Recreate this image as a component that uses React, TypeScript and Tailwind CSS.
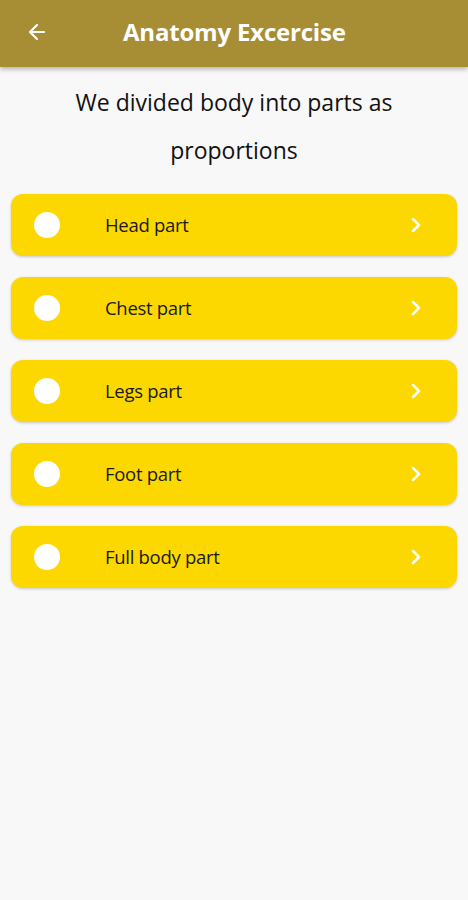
import { ArrowLeft, ChevronRight } from 'lucide-react';

const parts = ['Head part', 'Chest part', 'Legs part', 'Foot part', 'Full body part'];

export default function App() {
  return (
    <div className="min-h-[900px] w-full bg-[#f8f8f8]" style={{ fontFamily: '"Open Sans", "Noto Sans", sans-serif' }}>
      <header className="flex h-[67px] items-center bg-[#a78e35] pl-[25px] pr-6 pb-[4px] shadow-[0_2px_5px_rgba(0,0,0,0.3)]">
        <ArrowLeft className="h-[24px] w-[24px] text-white" strokeWidth={2.2} />
        <h1 className="ml-[74px] text-[24px] font-bold tracking-[-0.2px] text-white">Anatomy Excercise</h1>
      </header>

      <p className="mx-auto mt-[11px] w-[360px] text-center text-[23px] leading-[48px] text-[#111]">
        We divided body into parts as proportions
      </p>

      <div className="mt-[20px] flex flex-col gap-[21px] px-[11px]">
        {parts.map((p) => (
          <div
            key={p}
            className="flex h-[62px] items-center rounded-[12px] bg-[#fcd800] pl-[23px] pr-[29px] shadow-[0_1px_3px_rgba(0,0,0,0.2)]"
          >
            <span className="h-[26px] w-[26px] rounded-full bg-white" />
            <span className="ml-[45px] flex-1 text-[18.5px] tracking-[-0.3px] text-[#1a1a1a]">{p}</span>
            <ChevronRight className="h-[24px] w-[24px] text-white" strokeWidth={2.5} />
          </div>
        ))}
      </div>
    </div>
  );
}
